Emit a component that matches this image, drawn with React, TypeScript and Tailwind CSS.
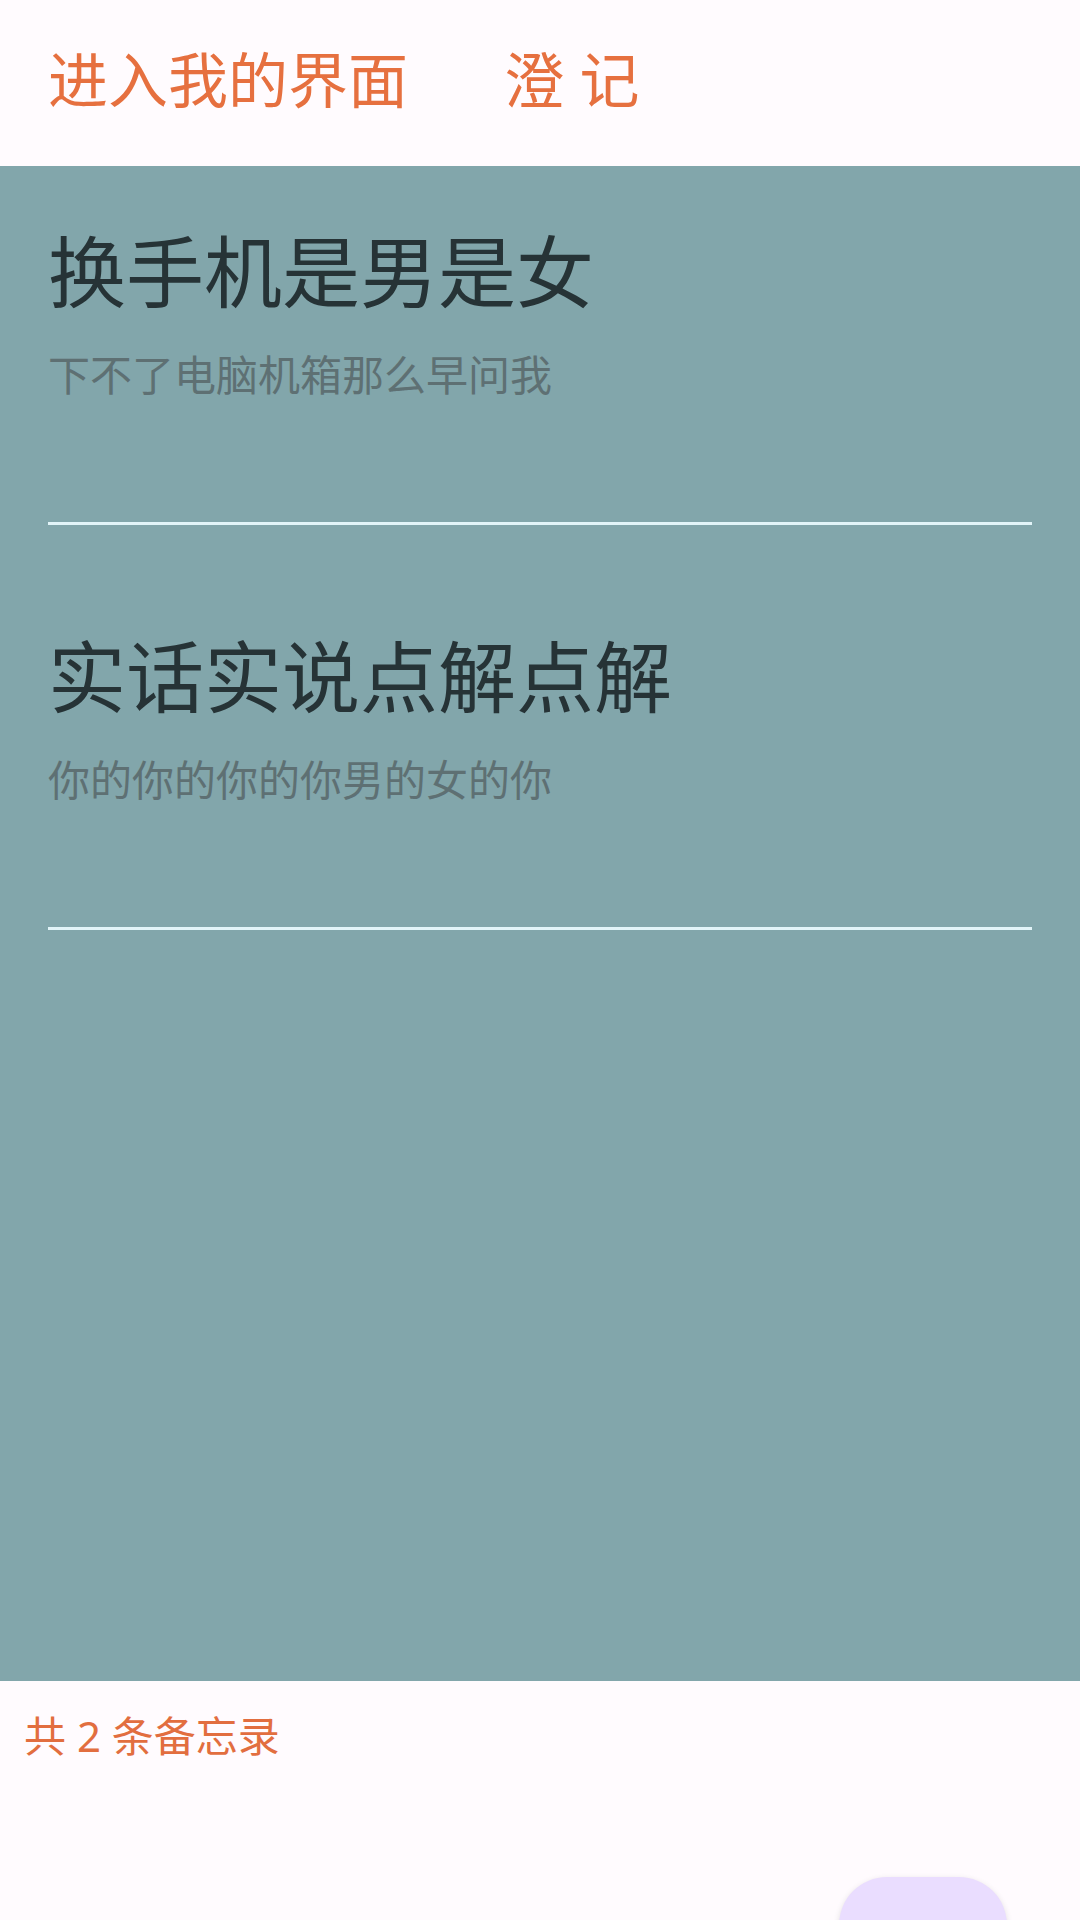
import React from 'react';

const font = '"Noto Sans", "Noto Sans CJK SC", sans-serif';

const memos = [
  { title: '换手机是男是女', body: '下不了电脑机箱那么早问我' },
  { title: '实话实说点解点解', body: '你的你的你的你男的女的你' },
];

export default function App() {
  return (
    <div className="relative flex flex-col w-[1080px] h-[1920px] overflow-hidden bg-[#fffbfe]" style={{ fontFamily: font }}>
      {/* top bar */}
      <div className="flex items-center h-[166px] shrink-0 pl-[48px] pb-[6px]">
        <span className="text-[60px] leading-[72px] text-[#e6703f]">进入我的界面</span>
        <span className="ml-[96px] text-[60px] leading-[72px] text-[#e6703f]">澄 记</span>
      </div>

      {/* memo list */}
      <div className="flex flex-col h-[1515px] shrink-0 bg-[#82a6ab] px-[48px] pt-[59px]">
        {memos.map((m, idx) => (
          <div key={idx} className="flex flex-col">
            <div className="text-[78px] leading-[94px] text-[#263336]">{m.title}</div>
            <div className="mt-[31px] text-[42px] leading-[50px] text-[#5e7073]">{m.body}</div>
            <div className="mt-[122px] h-[3px] bg-[#e2f4f8]" />
            <div className="h-[105px]" />
          </div>
        ))}
      </div>

      {/* footer */}
      <div className="pl-[24px] pt-[30px]">
        <span className="text-[42px] leading-[50px] text-[#e26e3f]">共 2 条备忘录</span>
      </div>

      {/* add button peeking from bottom */}
      <div className="absolute left-[839px] top-[1877px] w-[168px] h-[168px] rounded-[48px] bg-[#eaddff] shadow-[0_2px_6px_rgba(0,0,0,0.12)]" />
    </div>
  );
}
